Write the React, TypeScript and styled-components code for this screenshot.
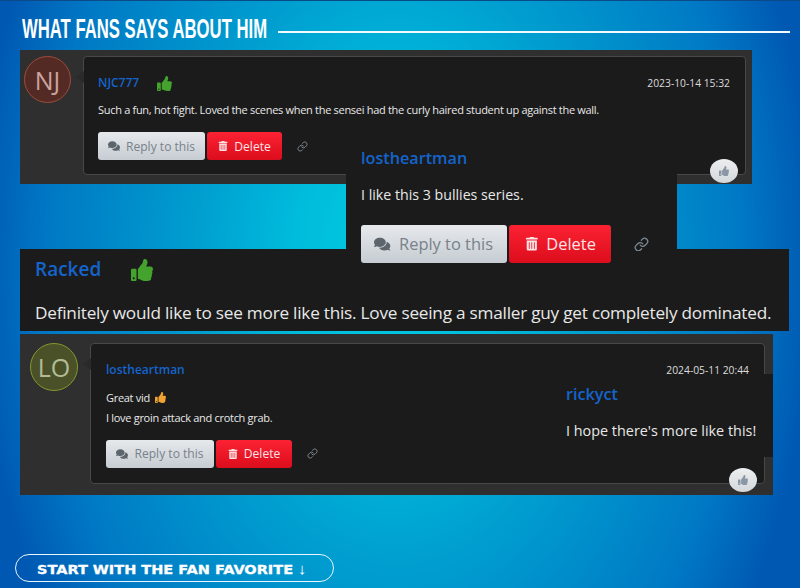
import React from "react";
import styled, { createGlobalStyle } from "styled-components";
import { FaComments, FaThumbsUp, FaTrashAlt } from "react-icons/fa";
import { LuLink } from "react-icons/lu";

const GlobalStyle = createGlobalStyle`
  html, body {
    margin: 0;
    padding: 0;
    overflow: hidden;
  }
  body {
    font-family: "Open Sans", "Liberation Sans", sans-serif;
  }
`;

const Page = styled.div`
  position: relative;
  width: 800px;
  height: 588px;
  box-sizing: border-box;
  overflow: hidden;
  border-top: 1px solid #0b4a86;
  background: radial-gradient(
    ellipse 420px 640px at 395px 260px,
    #00cbe2 0%,
    #00bcdc 24%,
    #009fd0 47%,
    #0078c4 83%,
    #0058b2 100%
  );
  background-color: #0048a8;
`;

const Header = styled.div`
  display: flex;
  align-items: center;
  height: 49px;
  padding: 7px 10px 0 22px;
  box-sizing: border-box;
  gap: 11px;
`;

const Title = styled.h2`
  flex: none;
  width: 245px;
  margin: 0;
  font-family: "Liberation Sans", sans-serif;
  font-size: 28px;
  font-weight: 700;
  color: #fff;
  white-space: nowrap;
  transform: scaleX(0.596);
  transform-origin: left center;
`;

const Rule = styled.div`
  flex: 1;
  height: 2px;
  margin-top: 6px;
  background: #f4fbff;
`;

const Panel = styled.div<{ $width: number; $height: number; $top?: number; $pad: string }>`
  display: flex;
  align-items: flex-start;
  gap: 12px;
  box-sizing: border-box;
  width: ${(p) => p.$width}px;
  height: ${(p) => p.$height}px;
  margin: ${(p) => p.$top ?? 0}px 0 0 20px;
  padding: ${(p) => p.$pad};
  background: #2f2f2f;
`;

const Avatar = styled.div<{ $bg: string; $ring: string; $fg: string; $size: number }>`
  flex: none;
  display: flex;
  align-items: center;
  justify-content: center;
  box-sizing: border-box;
  width: ${(p) => p.$size}px;
  height: ${(p) => p.$size}px;
  border-radius: 50%;
  background: ${(p) => p.$bg};
  border: 1px solid ${(p) => p.$ring};
  color: ${(p) => p.$fg};
  font-size: 25px;
`;

const Bubble = styled.div<{ $pad: number }>`
  position: relative;
  flex: 1;
  box-sizing: border-box;
  height: 100%;
  padding: 17px 15px 0 ${(p) => p.$pad}px;
  background: #1b1b1b;
  border: 1px solid #484848;
  border-radius: 4px;

  &::before {
    content: "";
    position: absolute;
    left: -8px;
    top: 14px;
    border-style: solid;
    border-width: 6px 8px 6px 0;
    border-color: transparent #2a2a2a transparent transparent;
  }
`;

const MetaRow = styled.div`
  display: flex;
  align-items: center;
  height: 18px;
`;

const Name = styled.span<{ $size: number }>`
  color: #1464cc;
  font-size: ${(p) => p.$size}px;
  font-weight: 600;
  line-height: 1.3;
`;

const GreenThumb = styled(FaThumbsUp)<{ $size: number; $gap: number }>`
  color: #44a32c;
  width: ${(p) => p.$size}px;
  height: ${(p) => p.$size}px;
  margin-left: ${(p) => p.$gap}px;
`;

const Stamp = styled.span`
  margin-left: auto;
  color: #dcdcdc;
  font-size: 10.3px;
`;

const Body = styled.p<{ $size: number; $top: number; $track?: number }>`
  margin: ${(p) => p.$top}px 0 0;
  color: #e8e8e8;
  font-size: ${(p) => p.$size}px;
  letter-spacing: ${(p) => p.$track ?? 0}px;
  line-height: 1.4;
  white-space: nowrap;
  display: flex;
  align-items: center;
  gap: 5px;
`;

const Actions = styled.div<{ $top: number; $gap: number; $btnGap: number }>`
  display: flex;
  align-items: center;
  gap: ${(p) => p.$btnGap}px;
  margin-top: ${(p) => p.$top}px;

  & > svg:last-child {
    margin-left: ${(p) => p.$gap}px;
  }
`;

const Btn = styled.button<{ $w: number; $h: number; $size: number; $danger?: boolean }>`
  display: flex;
  align-items: center;
  justify-content: center;
  gap: 0.5em;
  box-sizing: border-box;
  width: ${(p) => p.$w}px;
  height: ${(p) => p.$h}px;
  padding: 0;
  border: 0;
  border-radius: 3px;
  font-family: inherit;
  font-size: ${(p) => p.$size}px;
  color: ${(p) => (p.$danger ? "#fbe4e6" : "#79818a")};
  background: ${(p) =>
    p.$danger
      ? "linear-gradient(#fb2233, #dc0d1c)"
      : "linear-gradient(#e6e9ec, #c6ccd2)"};

  & svg {
    color: ${(p) => (p.$danger ? "#fbe4e6" : "#5c646c")};
  }
`;

const LikeChip = styled.div`
  position: absolute;
  right: 7px;
  bottom: -9px;
  display: flex;
  align-items: center;
  justify-content: center;
  width: 28px;
  height: 24px;
  border-radius: 50%;
  background: linear-gradient(#eceeef, #d5d8db);
  color: #8a96a3;
  font-size: 10px;
`;

const RackedPanel = styled.div`
  box-sizing: border-box;
  width: 769px;
  height: 82px;
  margin: 65px 0 0 20px;
  padding: 9px 0 0 15px;
  background: #1b1b1b;
`;

const RackedHead = styled.div`
  display: flex;
  align-items: center;
  height: 23px;
`;

const Floating = styled.div<{ $x: number; $y: number; $w: number; $h: number; $padTop: number }>`
  position: absolute;
  left: ${(p) => p.$x}px;
  top: ${(p) => p.$y}px;
  width: ${(p) => p.$w}px;
  height: ${(p) => p.$h}px;
  box-sizing: border-box;
  padding: ${(p) => p.$padTop}px 0 0 15px;
  background: #1b1b1b;
`;

const CtaPill = styled.div`
  display: flex;
  align-items: center;
  box-sizing: border-box;
  width: 319px;
  height: 28px;
  margin: 59px 0 0 15px;
  padding-left: 21px;
  border: 1.5px solid #eaf6ff;
  border-radius: 14px;
  color: #fff;
  font-family: "DejaVu Sans", sans-serif;
  font-size: 12.4px;
  font-weight: 700;
  white-space: nowrap;
`;

const CtaText = styled.span`
  display: inline-block;
  transform: scaleX(1.17);
  transform-origin: left center;
  -webkit-text-stroke: 0.3px #fff;
`;

const CtaArrow = styled.span`
  margin-left: 4px;
  font-size: 15px;
  font-weight: 400;
  font-family: "Liberation Sans", sans-serif;
  -webkit-text-stroke: 0;
`;

const OrangeThumb = styled(FaThumbsUp)`
  color: #f0a232;
  width: 11px;
  height: 11px;
`;

function ActionRow(props: { scale?: number; top: number; linkGap: number; wide?: boolean }) {
  const s = props.scale ?? 1;
  return (
    <Actions $top={props.top} $gap={props.linkGap} $btnGap={2 * s}>
      <Btn $w={(props.wide ? 108 : 107) * s} $h={28 * s} $size={12.1 * s}>
        <FaComments size={12 * s} />
        Reply to this
      </Btn>
      <Btn $danger $w={(props.wide ? 76 : 75) * s} $h={28 * s} $size={12.1 * s}>
        <FaTrashAlt size={10 * s} />
        Delete
      </Btn>
      <LuLink size={11 * s} color="#7f8c96" />
    </Actions>
  );
}

export default function App() {
  return (
    <Page>
      <GlobalStyle />
      <Header>
        <Title>WHAT FANS SAYS ABOUT HIM</Title>
        <Rule />
      </Header>

      <Panel $width={732} $height={134} $pad="6px 6px 9px 4px">
        <Avatar $bg="#532a24" $ring="#a04c3a" $fg="#c9a39c" $size={47}>
          NJ
        </Avatar>
        <Bubble $pad={14}>
          <MetaRow>
            <Name $size={12}>NJC777</Name>
            <GreenThumb $size={15} $gap={18} />
            <Stamp>2023-10-14 15:32</Stamp>
          </MetaRow>
          <Body $size={11} $top={10} $track={-0.3}>
            Such a fun, hot fight. Loved the scenes when the sensei had the curly haired student up against the wall.
          </Body>
          <ActionRow top={15} linkGap={13} />
          <LikeChip>
            <FaThumbsUp />
          </LikeChip>
        </Bubble>
      </Panel>

      <RackedPanel>
        <RackedHead>
          <Name $size={19}>Racked</Name>
          <GreenThumb $size={22} $gap={30} />
        </RackedHead>
        <Body $size={17.2} $top={20} $track={-0.23}>
          Definitely would like to see more like this. Love seeing a smaller guy get completely dominated.
        </Body>
      </RackedPanel>

      <Panel $width={753} $height={161} $top={3} $pad="9px 8px 11px 10px">
        <Avatar $bg="#4a5128" $ring="#87962f" $fg="#b3bb95" $size={48}>
          LO
        </Avatar>
        <Bubble $pad={15}>
          <MetaRow>
            <Name $size={12}>lostheartman</Name>
            <Stamp>2024-05-11 20:44</Stamp>
          </MetaRow>
          <Body $size={11} $top={11} $track={-0.3}>
            Great vid <OrangeThumb />
          </Body>
          <Body $size={11} $top={5} $track={-0.3}>
            I love groin attack and crotch grab.
          </Body>
          <ActionRow top={14} linkGap={13} wide />
          <LikeChip>
            <FaThumbsUp />
          </LikeChip>
        </Bubble>
      </Panel>

      <CtaPill>
        <CtaText>
          START WITH THE FAN FAVORITE<CtaArrow>↓</CtaArrow>
        </CtaText>
      </CtaPill>

      <Floating $x={346} $y={141} $w={331} $h={125} $padTop={5}>
        <Name $size={16.2}>lostheartman</Name>
        <Body $size={14.2} $top={16}>
          I like this 3 bullies series.
        </Body>
        <ActionRow scale={1.36} top={20} linkGap={20} />
      </Floating>

      <Floating $x={551} $y={373} $w={222} $h={83} $padTop={9}>
        <Name $size={16.2}>rickyct</Name>
        <Body $size={14.4} $top={16}>
          I hope there's more like this!
        </Body>
      </Floating>
    </Page>
  );
}
